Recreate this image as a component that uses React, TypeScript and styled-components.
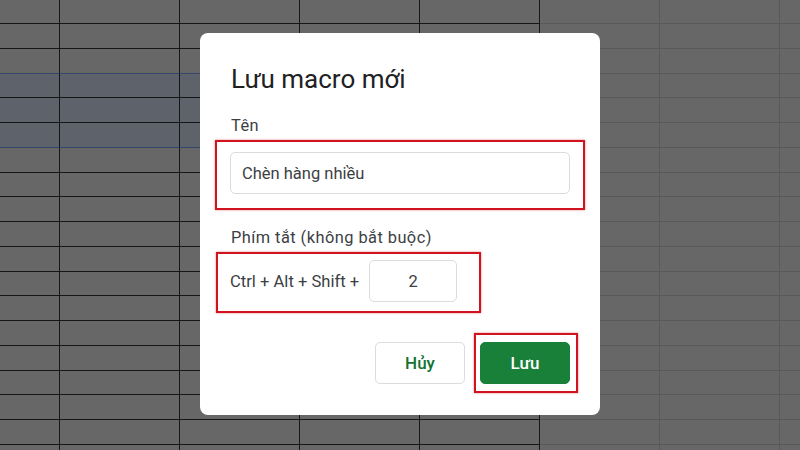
import React from "react";
import styled, { createGlobalStyle } from "styled-components";

const GlobalStyle = createGlobalStyle`
  html, body {
    margin: 0;
    padding: 0;
    overflow: hidden;
  }
  body {
    font-family: Roboto, "Noto Sans", "Liberation Sans", sans-serif;
  }
`;

const Page = styled.div`
  position: relative;
  width: 800px;
  height: 450px;
  overflow: hidden;
  background-color: #676767;
`;

const Sheet = styled.div`
  display: grid;
  grid-template-columns: 60px repeat(6, 120px) 40px;
  grid-template-rows: 24px repeat(18, 24.75px);
`;

const Cell = styled.div<{ $dark: boolean; $sel: boolean; $selEdge: boolean }>`
  box-sizing: border-box;
  background-color: ${(p) => (p.$sel ? "#5e636b" : "#676767")};
  border-right: 1px solid ${(p) => (p.$dark ? "#161616" : "#595959")};
  border-bottom: 1px solid
    ${(p) => (p.$selEdge ? "#34476a" : p.$dark ? "#161616" : "#595959")};
`;

const Dialog = styled.div`
  position: absolute;
  left: 200px;
  top: 33px;
  width: 400px;
  box-sizing: border-box;
  padding: 30px 30px 22px 30px;
  background: #ffffff;
  border-radius: 8px;
  display: flex;
  flex-direction: column;
`;

const Title = styled.h2`
  margin: 0 0 20px 1px;
  font-size: 26px;
  line-height: 32px;
  font-weight: 400;
  color: #202124;
`;

const Label = styled.div<{ $gap: number }>`
  margin: ${(p) => p.$gap}px 0 4px 1px;
  font-size: 16.4px;
  line-height: 21px;
  letter-spacing: 0.45px;
  color: #3c4043;
`;

const Highlight = styled.div<{ $pad: string; $inline?: boolean }>`
  box-sizing: border-box;
  border: 2px solid #d0141f;
  box-shadow: 0 0 2px rgba(208, 20, 31, 0.55);
  padding: ${(p) => p.$pad};
  display: ${(p) => (p.$inline ? "inline-flex" : "block")};
  align-items: center;
  align-self: flex-start;
`;

const WideHighlight = styled(Highlight)`
  align-self: stretch;
  margin: 0 -15px;
`;

const ShortcutHighlight = styled(Highlight)`
  margin-left: -14px;
`;

const TextField = styled.div<{ $w?: number; $center?: boolean }>`
  box-sizing: border-box;
  height: 42px;
  width: ${(p) => (p.$w ? `${p.$w}px` : "100%")};
  border: 1px solid #dadce0;
  border-radius: 5px;
  padding: 0 11px;
  display: flex;
  align-items: center;
  justify-content: ${(p) => (p.$center ? "center" : "flex-start")};
  font-size: 16.5px;
  color: #3c4043;
`;

const ShortcutRow = styled.div`
  display: flex;
  align-items: center;
  gap: 10px;
  font-size: 16.6px;
  color: #3c4043;
`;

const Actions = styled.div`
  margin-top: 20px;
  margin-right: -8px;
  display: flex;
  justify-content: flex-end;
  align-items: center;
  gap: 9px;
`;

const Button = styled.button<{ $primary?: boolean }>`
  box-sizing: border-box;
  width: 90px;
  height: 42px;
  border-radius: 5px;
  border: 1px solid ${(p) => (p.$primary ? "#188038" : "#dadce0")};
  background: ${(p) => (p.$primary ? "#188038" : "#ffffff")};
  color: ${(p) => (p.$primary ? "#ffffff" : "#137333")};
  font-family: Roboto, "Noto Sans", sans-serif;
  font-size: 17px;
  font-weight: 500;
  cursor: pointer;
`;

const COLS = 8;
const ROWS = 19;

export default function App() {
  const cells = [];
  for (let r = 0; r < ROWS; r++) {
    for (let c = 0; c < COLS; c++) {
      const dark = c < 5;
      cells.push(
        <Cell
          key={`${r}-${c}`}
          $dark={dark}
          $sel={dark && r >= 3 && r <= 5}
          $selEdge={dark && (r === 2 || r === 5)}
        />
      );
    }
  }

  return (
    <Page>
      <GlobalStyle />
      <Sheet>{cells}</Sheet>
      <Dialog>
        <Title>Lưu macro mới</Title>
        <Label $gap={0}>Tên</Label>
        <WideHighlight $pad="10px 13px 14px 13px">
          <TextField>Chèn hàng nhiều</TextField>
        </WideHighlight>
        <Label $gap={17}>Phím tắt (không bắt buộc)</Label>
        <ShortcutHighlight $inline $pad="6px 22px 9px 12px">
          <ShortcutRow>
            <span>Ctrl + Alt + Shift +</span>
            <TextField $w={88} $center>
              2
            </TextField>
          </ShortcutRow>
        </ShortcutHighlight>
        <Actions>
          <Button>Hủy</Button>
          <Highlight $pad="7px 6px 7px 4px">
            <Button $primary>Lưu</Button>
          </Highlight>
        </Actions>
      </Dialog>
    </Page>
  );
}
